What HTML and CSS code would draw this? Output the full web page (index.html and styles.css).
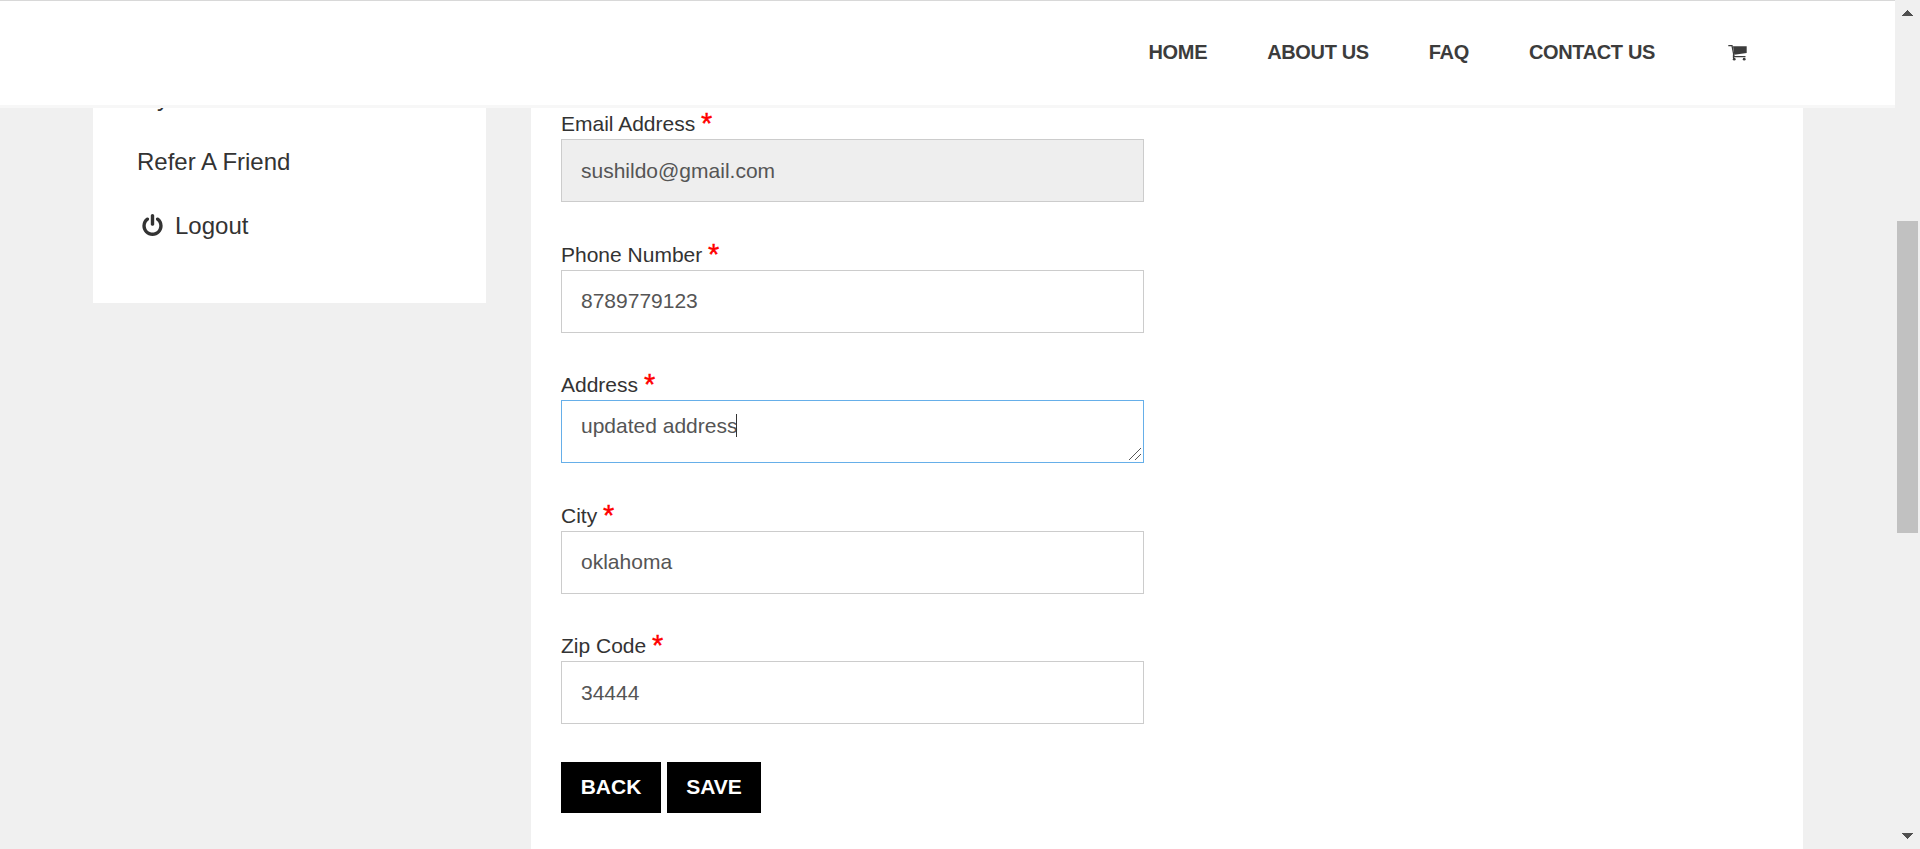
FILE: index.html
```html
<!DOCTYPE html>
<html lang="en">
<head>
<meta charset="utf-8">
<title>Edit Profile</title>
<link rel="stylesheet" href="styles.css">
</head>
<body>
<div class="window">
  <div class="page">
    <header class="header">
      <nav class="nav">
        <a>HOME</a><a>ABOUT US</a><a>FAQ</a><a>CONTACT US</a>
        <svg class="cart" viewBox="0 0 19 16"><path class="basket" d="M5 1.300H18.700V8L6.300 9.800z"/><path class="frame" d="M.3.700H4L6.200 12M5 11.700H17.500M5.500 9.500V13"/><circle cx="6.200" cy="14.200" r="1.400"/><circle cx="16.200" cy="14.200" r="1.400"/></svg>
      </nav>
    </header>
    <div class="content">
      <aside class="sidebar">
        <a class="item hidden-top">My</a>
        <a class="item">Refer A Friend</a>
        <a class="item logout"><svg class="power" viewBox="0 0 1536 1664"><path d="M1536 896q0 156-61 298t-164 245-245 164-298 61-298-61-245-164-164-245-61-298q0-182 80.500-343t226.500-270q43-32 95.500-25t83.500 50q32 42 24.500 94.500t-49.500 84.500q-98 74-151.500 181t-53.500 228q0 104 40.500 198.500t109.500 163.500 163.500 109.500 198.500 40.500 198.500-40.500 163.500-109.500 109.500-163.500 40.500-198.500q0-121-53.500-228t-151.500-181q-42-32-49.500-84.500t24.500-94.500q31-43 84-50t95 25q146 109 226.500 270t80.500 343zM896 128v640q0 52-38 90t-90 38-90-38-38-90v-640q0-52 38-90t90-38 90 38 38 90z"/></svg>Logout</a>
      </aside>
      <main class="main">
        <div class="field"><label>Email Address <span class="req">*</span></label><div class="input disabled">sushildo@gmail.com</div></div>
        <div class="field"><label>Phone Number <span class="req">*</span></label><div class="input raised">8789779123</div></div>
        <div class="field"><label>Address <span class="req">*</span></label><div class="input area">updated address<i class="caret"></i><svg class="grip" viewBox="0 0 12 12"><path d="M0 12L12 0M6 12L12 6"/></svg></div></div>
        <div class="field"><label>City <span class="req">*</span></label><div class="input raised">oklahoma</div></div>
        <div class="field"><label>Zip Code <span class="req">*</span></label><div class="input">34444</div></div>
        <div class="actions"><button class="back">BACK</button><button class="save">SAVE</button></div>
      </main>
    </div>
  </div>
  <div class="scrollbar">
    <svg class="arrow" viewBox="0 0 11 6"><path d="M5 0h1v1h1v1h1v1h1v1h1v1h1v1H0V5h1V4h1V3h1V2h1V1h1z"/></svg>
    <div class="thumb"></div>
    <svg class="arrow" viewBox="0 0 11 6"><path d="M0 0h11v1h-1v1H9v1H8v1H7v1H6v1H5V5H4V4H3V3H2V2H1V1H0z"/></svg>
  </div>
</div>
</body>
</html>
```
FILE: styles.css
```css
* { box-sizing: border-box; }
body { margin: 0; background: #f0f0f0; color: #333; font-family: "Liberation Sans", Arial, sans-serif; font-size: 21px; overflow: hidden; }
.window { display: flex; height: 849px; overflow: hidden; }
.page { width: 1895px; height: 849px; display: flex; flex-direction: column; }
.header { position: relative; z-index: 1; height: 108px; flex: none; background: #fff; border-top: 1px solid #d8d8d8; border-bottom: 3px solid #f7f7f7; display: flex; justify-content: flex-end; padding-right: 148px; }
.nav { display: flex; height: 101px; align-items: center; font-size: 20px; font-weight: bold; letter-spacing: -0.35px; color: #3c3c3c; line-height: 24px; }
.nav a { margin-right: 60px; white-space: nowrap; }
.cart { width: 19px; height: 16px; margin: 2px 0 0 13px; fill: #3c3c3c; }
.frame { fill: none; stroke: #3c3c3c; stroke-width: 1.3px; }
.content { display: flex; flex: 1; padding-left: 93px; }
.sidebar { width: 393px; height: 195px; background: #fff; margin-right: 45px; padding-left: 44px; font-size: 24px; display: flow-root; }
.item { display: flex; height: 64px; align-items: center; }
.hidden-top { margin-top: -42px; }
.power { width: 21px; height: 22px; margin: -2px 12px 0 5px; fill: #333; }
.main { width: 1272px; background: #fff; padding-left: 30px; }
.field { height: 130.5px; }
label { display: block; height: 31px; line-height: 31px; white-space: nowrap; }
.req { color: #f00; font-size: 29px; line-height: 0; position: relative; top: 2px; -webkit-text-stroke: 0.4px #f00; }
.input { position: relative; width: 583px; height: 63px; border: 1px solid #ccc; padding: 0 19px; line-height: 61px; color: #555; }
.raised { line-height: 59px; }
.disabled { background: #eee; }
.area { border-color: #66afe9; line-height: 30px; padding-top: 10px; }
.caret { position: absolute; left: 174px; top: 13px; width: 1px; height: 23px; background: #333; }
.grip { position: absolute; right: 2px; bottom: 2px; width: 12px; height: 12px; stroke: #555; fill: none; }
.actions { display: flex; gap: 6px; padding-top: 1.5px; }
button { height: 51px; padding: 0; border: 0; background: #000; color: #fff; font: bold 21px/49px "Liberation Sans", Arial, sans-serif; }
.back { width: 100px; }
.save { width: 94px; }
.actions button { padding-bottom: 2px; }
.scrollbar { width: 25px; height: 849px; background: #f0f0f0; display: flex; flex-direction: column; justify-content: space-between; align-items: center; padding: 10px 0; }
.arrow { width: 11px; height: 6px; fill: #505050; }
.thumb { width: 21px; height: 312px; margin-bottom: 95px; background: #c1c1c1; }
```
